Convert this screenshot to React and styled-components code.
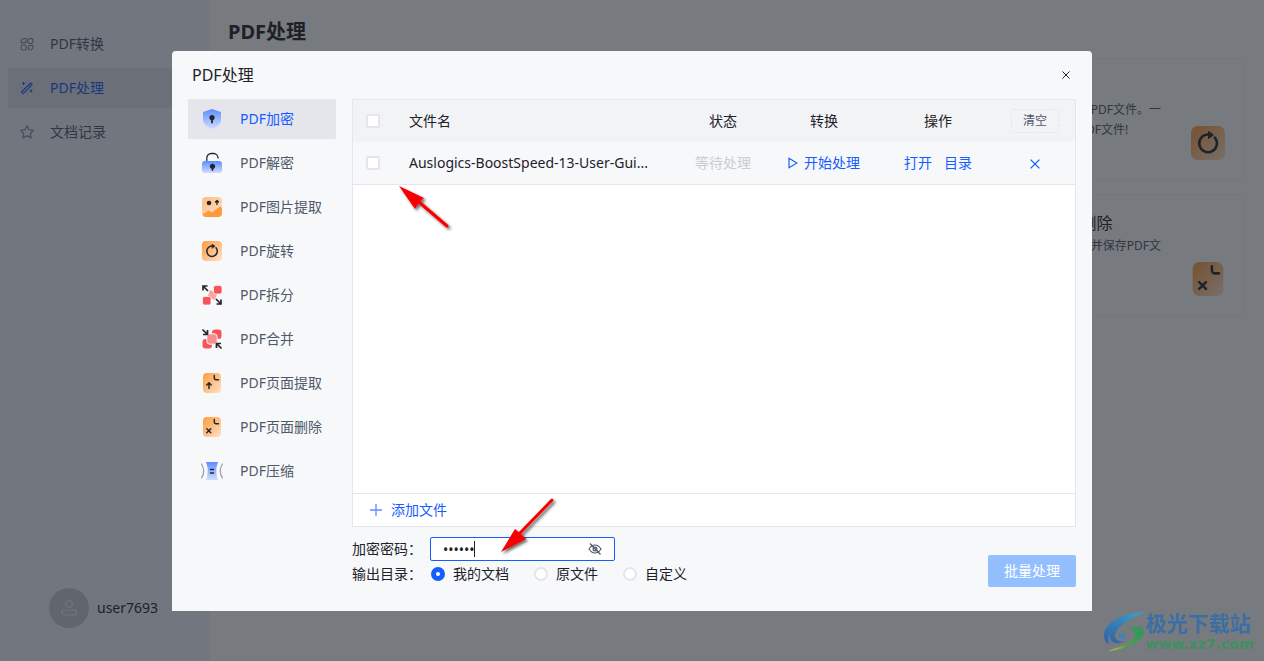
import React, { useState } from "react";

// Styling
import styled, { createGlobalStyle, css } from "styled-components";

const features = [
  { id: "encrypt", name: "PDF加密", text: "为PDF文件添加密码，保护文档安全" },
  { id: "decrypt", name: "PDF解密", text: "解除PDF文件密码，方便查看编辑" },
  { id: "image", name: "PDF图片提取", text: "提取PDF文件中的所有图片" },
  { id: "rotate", name: "PDF旋转", text: "快速旋转您的PDF文件。一键旋转所有PDF文件!" },
  { id: "split", name: "PDF拆分", text: "将一个PDF文件拆分为多个文件" },
  { id: "merge", name: "PDF合并", text: "将多个PDF文件合并为一个文件" },
  { id: "extract", name: "PDF页面提取", text: "提取指定页面并保存PDF文件" },
  { id: "remove", name: "PDF页面删除", text: "删除指定页面并保存PDF文件" },
  { id: "compress", name: "PDF压缩", text: "压缩PDF文件的大小" },
];

const targets = ["我的文档", "原文件", "自定义"];

// Feature Icons
const OrangeFill = ({ id }) => (
  <linearGradient id={id} x1="0" y1="0" x2="1" y2="1">
    <stop offset="0" stopColor="#ff9a3c" />
    <stop offset="1" stopColor="#ffe3c8" />
  </linearGradient>
);

const BlueFill = ({ id }) => (
  <linearGradient id={id} x1="0" y1="0" x2="0" y2="1">
    <stop offset="0" stopColor="#5c8dff" />
    <stop offset="1" stopColor="#cfdeff" />
  </linearGradient>
);

const FeatureIcon = ({ type, size = 20, scope = "menu" }) => {
  const fill = `${scope}-${type}`;
  const dark = { stroke: "#22262e", fill: "none", strokeLinecap: "round", strokeLinejoin: "round" };
  const shapes = {
    encrypt: (
      <>
        <BlueFill id={fill} />
        <path d="M10 0 19 3v8c0 4-4 7-9 9-5-2-9-5-9-9V3z" fill={`url(#${fill})`} />
        <circle cx="10" cy="8.5" r="2.6" fill="#22262e" />
        <path d="M10 9v4.5" {...dark} strokeWidth="1.8" />
      </>
    ),
    decrypt: (
      <>
        <BlueFill id={fill} />
        <path d="M4.8 7.5V5A4.5 4.5 0 0 1 9.3.5h2.4A4.5 4.5 0 0 1 16 5" {...dark} strokeWidth="1.3" />
        <rect y="8" width="20" height="12" rx="3" fill={`url(#${fill})`} />
        <circle cx="10.5" cy="13.3" r="2.6" fill="#22262e" />
        <path d="M10.5 14v3.3" {...dark} strokeWidth="1.6" />
      </>
    ),
    image: (
      <>
        <linearGradient id={fill} x1="0" y1="0" x2="1" y2="1">
          <stop offset="0" stopColor="#ffbc80" />
          <stop offset="1" stopColor="#ffe3c8" />
        </linearGradient>
        <rect width="20" height="20" rx="4" fill={`url(#${fill})`} />
        <path d="M.5 17.5 6.5 13.5l3.5 1.8 8-5.8 2 1.5v5a4 4 0 0 1-4 4H4a4 4 0 0 1-3.5-2.5z" fill="#ff9a3c" />
        <circle cx="7" cy="6" r="2.3" fill="#22262e" />
        <path d="M15 7.5V4M13.5 5 15 3.5 16.5 5" {...dark} strokeWidth="1.3" />
      </>
    ),
    rotate: (
      <>
        <OrangeFill id={fill} />
        <rect width="20" height="20" rx="4" fill={`url(#${fill})`} />
        <path d="M14 6.8A5.200 5.200 0 1 1 10.500 5h1.500" {...dark} strokeWidth="1.5" />
        <path d="M10.300 3.300 13 5.300 10.300 7.200z" {...dark} fill="#22262e" strokeWidth="0.6" />
      </>
    ),
    split: (
      <>
        <rect x="6.5" y="6" width="8" height="8" rx="1.5" fill="#fba3a5" transform="rotate(18 10.5 10)" />
        <rect x="11.5" y="0.5" width="8.5" height="8.5" rx="2" fill="#f95357" stroke="#f7f8fa" strokeWidth="0.8" />
        <rect x="0.5" y="11.5" width="8.5" height="8.5" rx="2" fill="#f95357" stroke="#f7f8fa" strokeWidth="0.8" />
        <path d="M1 5.500V1h4.500M1 1l5 5M19 14.500V19h-4.500M19 19l-5-5" {...dark} strokeLinecap="butt" strokeLinejoin="miter" strokeWidth="1.7" />
      </>
    ),
    merge: (
      <>
        <rect x="10" y="0.5" width="9.5" height="9.5" rx="3" fill="#f95357" />
        <rect x="0.5" y="10" width="9.5" height="9.5" rx="3" fill="#f95357" />
        <rect x="4.8" y="4.8" width="10.4" height="10.4" rx="3" fill="#fa8d90" stroke="#f7f8fa" />
        <path d="M5.500 1v4.500H1M5.500 5.500l-5-5M14.500 19v-4.500H19M14.500 14.500l5 5" {...dark} strokeLinecap="butt" strokeLinejoin="miter" strokeWidth="1.7" />
      </>
    ),
    extract: (
      <>
        <OrangeFill id={fill} />
        <rect x="1" width="18" height="20" rx="4" fill={`url(#${fill})`} />
        <path d="M12.300 2.500V5a1.700 1.700 0 0 0 1.700 1.700h2.500M7 15.500v-5M4.800 12 7 9.800 9.200 12" {...dark} strokeWidth="1.5" />
      </>
    ),
    remove: (
      <>
        <OrangeFill id={fill} />
        <rect x="1" width="18" height="20" rx="4" fill={`url(#${fill})`} />
        <path d="M12.300 2.500V5a1.700 1.700 0 0 0 1.700 1.700h2.500M4.800 11.800l4 4M8.800 11.800l-4 4" {...dark} strokeWidth="1.5" />
      </>
    ),
    compress: (
      <>
        <BlueFill id={fill} />
        <path d="M4 1h12q-3.500 9 0 18H4Q7.500 10 4 1z" fill={`url(#${fill})`} />
        <path d="M-.5 3q4.500 7 0 14M20.500 3q-4.500 7 0 14" {...dark} stroke="#9aa2ae" strokeWidth="1.3" />
        <path d="M8.500 8.500h3M8.500 12h3" {...dark} strokeWidth="1.5" />
      </>
    ),
  };
  return (
    <svg width={size} height={size} viewBox="0 0 20 20" overflow="visible" aria-hidden="true">
      {shapes[type]}
    </svg>
  );
};

// Sidebar Icons
const ConvertIcon = () => (
  <LineIcon viewBox="0 0 14 14">
    <path d="M6 1.500H4.500A3.300 3.300 0 0 0 1.200 5v.8H5a1 1 0 0 0 1-1z" />
    <circle cx="10.300" cy="4" r="2.700" />
    <rect x="1.200" y="8" width="5" height="5" rx="1.500" />
    <path d="M8.500 13V9.500a1 1 0 0 1 1-1H13V9.500A3.500 3.500 0 0 1 9.500 13" />
  </LineIcon>
);

const WandIcon = () => (
  <LineIcon viewBox="0 0 14 14">
    <path d="M1.500 11 10.500 2 12.200 3.700 3.200 12.700zM8.500 4l1.700 1.700" />
    <path d="M3.500 1v3M2 2.500h3M11 8.500v3M9.500 10h3M6.500 1h.5M1.200 6.500h.5M7.500 12.500H8M13 7h.3" />
  </LineIcon>
);

const StarIcon = () => (
  <LineIcon viewBox="0 0 14 14">
    <path d="M7 .8 9 4.700l4.400.7-3.100 3.100.7 4.400L7 10.900 3 12.900l.7-4.400L.6 5.400 5 4.700z" />
  </LineIcon>
);

const navItems = [
  { name: "PDF转换", icon: <ConvertIcon /> },
  { name: "PDF处理", icon: <WandIcon />, active: true },
  { name: "文档记录", icon: <StarIcon /> },
];

const Sidebar = () => (
  <StyledSidebar>
    <nav>
      {navItems.map((item) => (
        <NavLink href="#" key={item.name} $active={item.active}>
          {item.icon}
          {item.name}
        </NavLink>
      ))}
    </nav>
    <User>
      <Avatar>
        <LineIcon viewBox="0 0 16 16" $size={16}>
          <circle cx="8" cy="4" r="3.300" />
          <rect x="0.800" y="10" width="14.400" height="5" rx="2" />
        </LineIcon>
      </Avatar>
      user7693
    </User>
  </StyledSidebar>
);

const FileTable = () => (
  <Table>
    <colgroup>
      <col width="40" />
      <col />
      <col width="88" />
      <col width="114" />
      <col width="114" />
      <col width="80" />
    </colgroup>
    <thead>
      <tr>
        <th>
          <Checkbox type="checkbox" aria-label="全选" />
        </th>
        <th className="name">文件名</th>
        <th>状态</th>
        <th>转换</th>
        <th>操作</th>
        <th>
          <ClearButton>清空</ClearButton>
        </th>
      </tr>
    </thead>
    <tbody>
      <tr>
        <td>
          <Checkbox type="checkbox" aria-label="选择文件" />
        </td>
        <td className="name">Auslogics-BoostSpeed-13-User-Gui...</td>
        <td className="waiting">等待处理</td>
        <td>
          <TextButton>
            <svg width="10" height="12" viewBox="0 0 10 12" aria-hidden="true">
              <path d="M1 1.300 9 6 1 10.700z" fill="none" stroke="currentColor" strokeWidth="1.2" />
            </svg>
            开始处理
          </TextButton>
        </td>
        <td>
          <Actions>
            <TextButton>打开</TextButton>
            <TextButton>目录</TextButton>
          </Actions>
        </td>
        <td>
          <TextButton aria-label="移除">
            <CrossIcon size={10} width={1.3} />
          </TextButton>
        </td>
      </tr>
    </tbody>
  </Table>
);

const CrossIcon = ({ size, width }) => (
  <svg width={size} height={size} viewBox="0 0 10 10" aria-hidden="true">
    <path d="M.6.6l8.800 8.800M9.400.6.6 9.400" stroke="currentColor" strokeWidth={width} />
  </svg>
);

const Pointer = ({ id, tip, tail, left, neck, right }) => (
  <g filter={`url(#${id})`}>
    <filter id={id} x="-30%" y="-30%" width="170%" height="170%">
      <feDropShadow dx="2" dy="2" stdDeviation="1.5" floodColor="#000" floodOpacity="0.6" />
    </filter>
    <path d={`M${neck}L${tail}`} stroke="#f80000" strokeWidth="3" strokeLinecap="round" />
    <path d={`M${tip}L${left} ${neck} ${right}z`} fill="#f80000" />
  </g>
);

const Dialog = () => {
  const [current, setCurrent] = useState("encrypt");
  const [target, setTarget] = useState(targets[0]);

  return (
    <StyledDialog role="dialog" aria-labelledby="dialog-title">
      <DialogHeader>
        <h2 id="dialog-title">PDF处理</h2>
        <CloseButton aria-label="关闭">
          <CrossIcon size={8} width={1.2} />
        </CloseButton>
      </DialogHeader>
      <DialogBody>
        <Menu>
          {features.map((item) => (
            <MenuButton
              key={item.id}
              $active={item.id === current}
              onClick={() => setCurrent(item.id)}
            >
              <FeatureIcon type={item.id} />
              {item.name}
            </MenuButton>
          ))}
        </Menu>
        <Content>
          <FilePanel>
            <FileTable />
            <AddBar>
              <TextButton $gap={9}>
                <svg width="12" height="12" viewBox="0 0 12 12" aria-hidden="true">
                  <path d="M6 0v12M0 6h12" stroke="#5c8dff" strokeWidth="1.3" />
                </svg>
                添加文件
              </TextButton>
            </AddBar>
          </FilePanel>
          <Settings>
            <div>
              <SettingRow>
                <label htmlFor="password">加密密码：</label>
                <PasswordBox>
                  <input id="password" type="password" defaultValue="123456" />
                  <Caret />
                  <EyeButton aria-label="显示密码">
                    <svg width="14" height="14" viewBox="0 0 14 14" aria-hidden="true">
                      <path
                        d="M1 7q2.500-4 6-4t6 4q-2.500 4-6 4T1 7zM2 1.500l10.500 11"
                        fill="none"
                        stroke="currentColor"
                        strokeWidth="1.2"
                      />
                      <circle cx="7" cy="7" r="1.9" fill="none" stroke="currentColor" strokeWidth="1.2" />
                    </svg>
                  </EyeButton>
                </PasswordBox>
              </SettingRow>
              <SettingRow>
                <span>输出目录：</span>
                <RadioGroup>
                  {targets.map((name) => (
                    <label key={name}>
                      <Radio
                        type="radio"
                        name="target"
                        checked={name === target}
                        onChange={() => setTarget(name)}
                      />
                      {name}
                    </label>
                  ))}
                </RadioGroup>
              </SettingRow>
            </div>
            <RunButton disabled>批量处理</RunButton>
          </Settings>
        </Content>
      </DialogBody>
      <Pointers width="920" height="560" viewBox="0 0 920 560" aria-hidden="true">
        <Pointer id="pointer-row" tip="227 135" tail="275 175" left="252 147" neck="247 151" right="243 158" />
        <Pointer id="pointer-password" tip="329 501" tail="380 449" left="343 478" neck="348 482" right="354 488" />
      </Pointers>
    </StyledDialog>
  );
};

const App = () => (
  <>
    <GlobalStyle />
    <Page>
      <Sidebar />
      <Main>
        <h1>PDF处理</h1>
        <Cards>
          {features.map((item) => (
            <Card key={item.id}>
              <div>
                <h3>{item.name}</h3>
                <p>{item.text}</p>
              </div>
              <FeatureIcon type={item.id} size={34} scope="card" />
            </Card>
          ))}
        </Cards>
      </Main>
    </Page>
    <Mask>
      <Dialog />
    </Mask>
    <Watermark>
      <svg width="44" height="42" viewBox="0 0 44 42" aria-hidden="true">
        <linearGradient id="swirl-blue" x1="1" y1="0" x2="0" y2="1">
          <stop offset="0" stopColor="#3fa0c8" />
          <stop offset="1" stopColor="#2f62a6" />
        </linearGradient>
        <linearGradient id="swirl-green" x1="1" y1="0" x2="0" y2="1">
          <stop offset="0" stopColor="#2f9460" />
          <stop offset="0.6" stopColor="#4f9f50" />
          <stop offset="1" stopColor="#c9c436" />
        </linearGradient>
        <path d="M43 1C22 1 3 11 2 24c0 5 2 8 5 9C4 23 12 12 43 1z" fill="url(#swirl-blue)" />
        <path d="M40 3C20 8 7 16 8 26c1 7 9 8 14 4-7 1-11-3-8-9C17 15 26 9 40 3z" fill="url(#swirl-blue)" />
        <path d="M20 22c-5 1-4 6 0 6 4-1 5-4 3-7 1 4-3 4-3 1z" fill="#3b83bd" />
        <path d="M27 17c8-3 16-2 15 5-2 9-15 14-31 16 14-4 22-9 22-14 0-4-3-6-6-7z" fill="url(#swirl-green)" />
        <path d="M34 22c1 7-12 13-28 18 14-1 32-7 35-18z" fill="url(#swirl-green)" />
      </svg>
      <div>
        <strong>极光下载站</strong>
        <span>www.xz7.com</span>
      </div>
    </Watermark>
  </>
);

const GlobalStyle = createGlobalStyle`
  * {
    margin: 0;
    padding: 0;
    box-sizing: border-box;
  }
  body, button, input {
    font-family: "Noto Sans", "Noto Sans CJK SC", sans-serif;
    font-size: 14px;
    font-weight: 400;
    color: #1d2129;
  }
  body {
    line-height: 22px;
  }
  button {
    border: none;
    background: none;
    line-height: 22px;
    cursor: pointer;
  }
  svg {
    flex-shrink: 0;
  }
`;

const Page = styled.div`
  display: flex;
  min-height: 100vh;
  background: white;
`;

const StyledSidebar = styled.aside`
  width: 210px;
  padding: 24px 8px 33px;
  display: flex;
  flex-direction: column;
  justify-content: space-between;
  background: #f2f5fc;
  nav {
    display: flex;
    flex-direction: column;
    gap: 4px;
  }
`;

const NavLink = styled.a`
  height: 40px;
  padding: 0 12px;
  display: flex;
  align-items: center;
  gap: 16px;
  border-radius: 2px;
  text-decoration: none;
  color: #4e5969;
  svg {
    color: #86909c;
  }
  ${({ $active }) =>
    $active &&
    css`
      background: #e2e4ea;
      &,
      svg {
        color: #165dff;
      }
    `}
`;

const LineIcon = styled.svg`
  width: ${({ $size = 14 }) => $size}px;
  height: ${({ $size = 14 }) => $size}px;
  fill: none;
  stroke: currentColor;
  stroke-width: 1.2;
  stroke-linejoin: round;
`;

const User = styled.div`
  padding-left: 41px;
  display: flex;
  align-items: center;
  gap: 8px;
`;

const Avatar = styled.span`
  width: 40px;
  height: 40px;
  display: flex;
  align-items: center;
  justify-content: center;
  border-radius: 50%;
  background: #c9cdd4;
  color: #f2f3f5;
`;

const Main = styled.main`
  flex: 1;
  padding: 18px 19px 18px 18px;
  h1 {
    margin-bottom: 12px;
    font-size: 20px;
    font-weight: 700;
    line-height: 28px;
  }
`;

const Cards = styled.div`
  display: grid;
  grid-template-columns: repeat(4, 1fr);
  gap: 14px 16px;
`;

const Card = styled.article`
  height: 122px;
  padding: 15px 19px 19px 15px;
  display: flex;
  justify-content: space-between;
  border: 1px solid #f2f3f5;
  border-radius: 8px;
  div {
    width: 147px;
  }
  h3 {
    font-size: 16px;
    font-weight: 400;
    line-height: 26px;
  }
  p {
    font-size: 12px;
    line-height: 20px;
    word-break: break-all;
    color: #4e5969;
  }
  svg {
    align-self: flex-end;
  }
`;

const Mask = styled.div`
  position: fixed;
  inset: 0;
  padding: 51px 20px 20px;
  display: flex;
  align-items: flex-start;
  justify-content: center;
  overflow: auto;
  background: rgba(29, 33, 41, 0.6);
`;

const StyledDialog = styled.section`
  position: relative;
  width: 100%;
  max-width: 920px;
  padding: 0 16px 24px;
  border-radius: 4px 4px 0 0;
  background: #f7f8fa;
`;

const DialogHeader = styled.header`
  height: 48px;
  padding: 0 4px;
  display: flex;
  align-items: center;
  justify-content: space-between;
  h2 {
    font-size: 16px;
    font-weight: 400;
  }
`;

const CloseButton = styled.button`
  width: 12px;
  height: 12px;
  display: flex;
  align-items: center;
  justify-content: center;
`;

const DialogBody = styled.div`
  display: flex;
  gap: 16px;
`;

const Menu = styled.nav`
  width: 148px;
  display: flex;
  flex-direction: column;
  gap: 4px;
`;

const MenuButton = styled.button`
  height: 40px;
  padding: 0 14px;
  display: flex;
  align-items: center;
  gap: 18px;
  border-radius: 2px;
  white-space: nowrap;
  color: ${({ $active }) => ($active ? "#165dff" : "#4e5969")};
  background: ${({ $active }) => ($active ? "#e5e6eb" : "transparent")};
`;

const Content = styled.div`
  flex: 1;
  min-width: 0;
`;

const FilePanel = styled.div`
  min-height: 428px;
  display: flex;
  flex-direction: column;
  justify-content: space-between;
  border: 1px solid #e5e6eb;
  background: white;
`;

const Table = styled.table`
  width: 100%;
  table-layout: fixed;
  border-collapse: collapse;
  th,
  td {
    height: 42px;
    text-align: center;
    font-weight: 400;
    white-space: nowrap;
  }
  thead {
    background: #f2f3f5;
  }
  tbody tr {
    background: #f7f8fa;
    border-bottom: 1px solid #e5e6eb;
  }
  .name {
    padding-left: 16px;
    text-align: left;
    overflow: hidden;
    text-overflow: ellipsis;
  }
  .waiting {
    color: #c9cdd4;
  }
`;

const Checkbox = styled.input`
  appearance: none;
  width: 14px;
  height: 14px;
  display: block;
  margin: 0 auto;
  border: 2px solid #e5e6eb;
  border-radius: 2px;
  background: white;
`;

const ClearButton = styled.button`
  width: 48px;
  height: 24px;
  border: 1px dashed #e5e6eb;
  border-radius: 2px;
  font-size: 12px;
  color: #4e5969;
`;

const TextButton = styled.button`
  display: inline-flex;
  align-items: center;
  vertical-align: middle;
  gap: ${({ $gap = 6 }) => $gap}px;
  color: #165dff;
`;

const Actions = styled.div`
  display: flex;
  justify-content: center;
  gap: 12px;
`;

const AddBar = styled.div`
  height: 33px;
  padding: 0 17px;
  display: flex;
  align-items: center;
  border-top: 1px solid #e5e6eb;
`;

const Settings = styled.div`
  padding-top: 10px;
  display: flex;
  align-items: flex-end;
  justify-content: space-between;
`;

const SettingRow = styled.div`
  display: flex;
  align-items: center;
  padding-bottom: 2px;
  > :first-child {
    width: 78px;
  }
`;

const PasswordBox = styled.div`
  position: relative;
  input {
    width: 185px;
    height: 24px;
    padding: 0 36px 0 12px;
    border: 1px solid #165dff;
    border-radius: 2px;
    outline: none;
    background: white;
  }
`;

const Caret = styled.i`
  position: absolute;
  top: 4px;
  left: 44px;
  width: 1px;
  height: 16px;
  background: #1d2129;
`;

const EyeButton = styled.button`
  position: absolute;
  top: 5px;
  right: 13px;
  width: 14px;
  height: 14px;
  display: flex;
  color: #4e5969;
`;

const RadioGroup = styled.div`
  display: flex;
  gap: 24px;
  label {
    display: flex;
    align-items: center;
    gap: 8px;
  }
`;

const Radio = styled.input`
  appearance: none;
  width: 14px;
  height: 14px;
  margin-left: 1px;
  border: 2px solid #e5e6eb;
  border-radius: 50%;
  background: white;
  &:checked {
    border: 5px solid #165dff;
  }
`;

const RunButton = styled.button`
  width: 88px;
  height: 32px;
  border-radius: 2px;
  color: white;
  background: #94bfff;
`;

const Pointers = styled.svg`
  position: absolute;
  top: 0;
  left: 0;
  pointer-events: none;
`;

const Watermark = styled.div`
  position: fixed;
  right: 10px;
  bottom: 8px;
  display: flex;
  align-items: center;
  pointer-events: none;
  strong,
  span {
    display: block;
    white-space: nowrap;
  }
  strong {
    font-size: 21px;
    font-weight: 700;
    line-height: 24px;
    color: #3a6ea5;
  }
  span {
    font-family: "DejaVu Sans", sans-serif;
    font-size: 14px;
    font-weight: 700;
    line-height: 18px;
    color: #3c9160;
  }
`;

export default App;
